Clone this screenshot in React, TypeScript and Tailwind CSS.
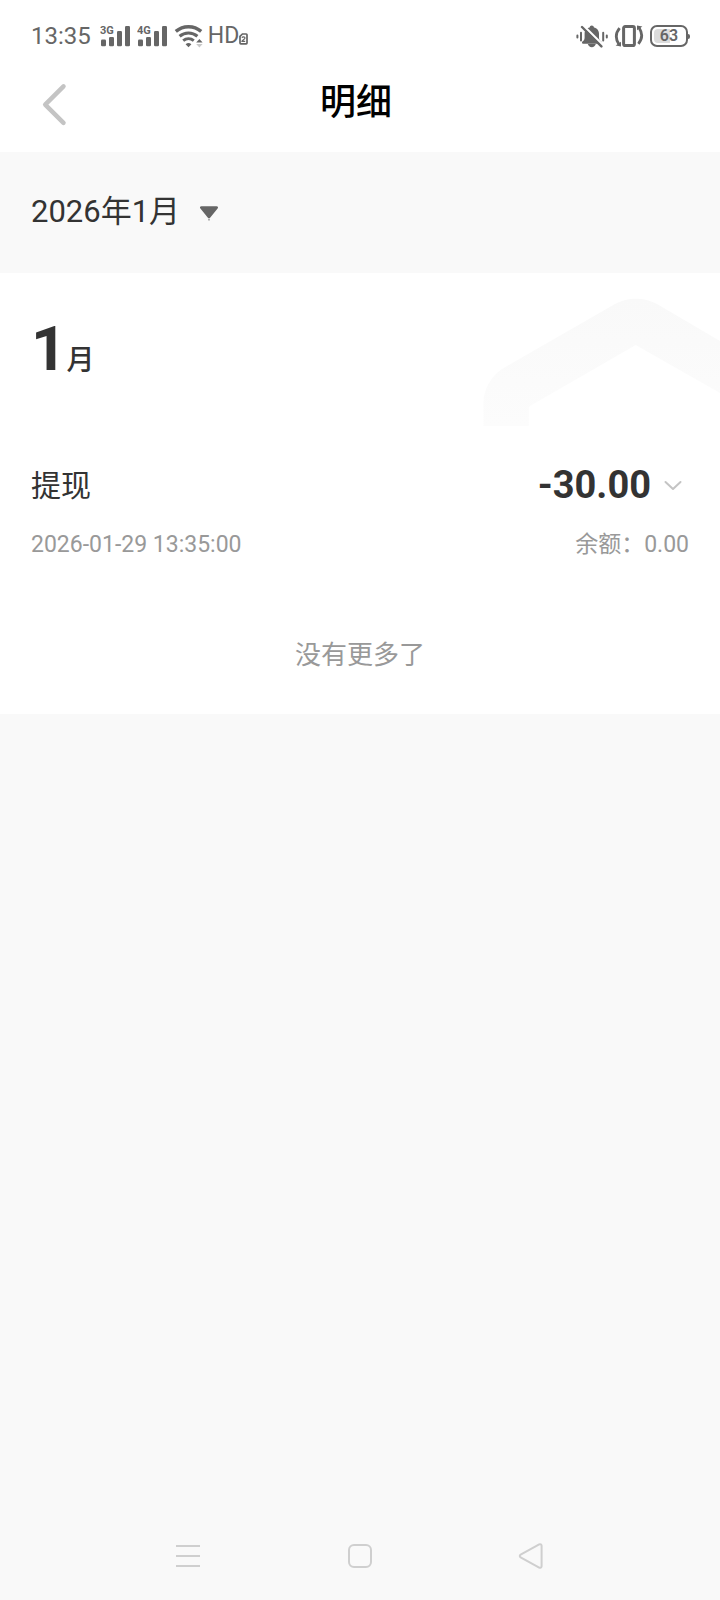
import React, { useState } from 'react';

type Transaction = {
    id: number;
    title: string;
    amount: string;
    time: string;
    balance: string;
};

const months = ['2026年1月'];

const transactions: Transaction[] = [
    { id: 1, title: '提现', amount: '-30.00', time: '2026-01-29 13:35:00', balance: '0.00' }
];

const IconSignal = ({ label }: { label: string }) => (
    <svg className="w-[30px] h-6 shrink-0" viewBox="0 0 30 24" fill="currentColor">
        <text x="0" y="9.5" fontSize="11" fontWeight="700" fontFamily="Roboto, sans-serif">{label}</text>
        <rect x="1" y="15.5" width="5" height="6.8" rx="1.2" />
        <rect x="9" y="13" width="5" height="9.3" rx="1.2" />
        <rect x="17" y="7" width="5" height="15.3" rx="1.2" />
        <rect x="25" y="2" width="5" height="20.3" rx="1.2" />
    </svg>
);

const IconWifi = () => (
    <svg className="w-[30px] h-6 shrink-0" viewBox="0 0 30 24" fill="none" stroke="currentColor">
        <path d="M1.8 7.4a19.5 19.5 0 0 1 25.4 0" strokeWidth="3.4" />
        <path d="M5.6 12.2a14 14 0 0 1 17.8 0" strokeWidth="3.2" />
        <path d="M9.2 16.6a8.6 8.6 0 0 1 10.6 0" strokeWidth="3" />
        <path d="M11.6 20.2a4.4 4.4 0 0 1 5.8 0L14.5 23.2z" fill="currentColor" stroke="none" />
        <path d="M25.4 15l3.2 3.6h-6.4z" fill="currentColor" stroke="none" />
        <path d="M25.4 23.4l3.2-3.4h-6.4z" fill="#c8c8c8" stroke="none" />
    </svg>
);

const IconSimTwo = () => (
    <svg className="w-[9px] h-3 shrink-0" viewBox="0 0 9 12" fill="none" stroke="currentColor">
        <path d="M3.4 1h3.8a.8.8 0 0 1 .8.8V10a.8.8 0 0 1-.8.8H1.8A.8.8 0 0 1 1 10V3.4z" strokeWidth="1.7" />
        <path d="M3 4.8c.4-1.3 3-1.2 3 .2C6 6.2 3.2 7.2 3 8.400h3.2" strokeWidth="1.2" />
    </svg>
);

const IconMuted = () => (
    <svg className="w-8 h-6 shrink-0" viewBox="0 0 32 24" fill="none" stroke="currentColor" strokeLinecap="round">
        <path d="M6.4 17.4c1.6-1 2.2-2 2.2-4V9.8c0-3.6 2.2-5.9 5-6.4.2-1.3 1-2 2.2-2s2 .7 2.2 2c2.800.5 5 2.800 5 6.4v3.6c0 2 .6 3 2.200 4 .8.6.4 2.4-.6 2.4H7c-1 0-1.4-1.800-.6-2.400z" fill="currentColor" stroke="none" />
        <path d="M11.8 20h8c-.6 2-2 3.2-4 3.2s-3.4-1.2-4-3.2z" fill="currentColor" stroke="none" />
        <path d="M7.6 1.8L27 21.2" stroke="#fff" strokeWidth="2.4" />
        <path d="M6 3L25.4 22.4" strokeWidth="2.4" />
        <path d="M1.4 11.6v2M5 8.8v7.6M27.2 8.8v7.6M30.8 11.6v2" strokeWidth="2" />
    </svg>
);

const IconVibrate = () => (
    <svg className="w-[30px] h-6 shrink-0" viewBox="0 0 30 24" fill="none" stroke="currentColor">
        <rect x="9.6" y="2.6" width="10.8" height="19" rx="1.6" strokeWidth="3" />
        <path d="M5.6 4.2C1.6 9 1.6 15 4.8 20" strokeWidth="2.8" />
        <path d="M24.4 19.8C28.4 15 28.4 9 25.2 4" strokeWidth="2.8" />
        <path d="M1.6 21.4l5.4-3.6v4.8zM28.4 2.6l-5.4 3.6V1.4z" fill="currentColor" stroke="none" />
    </svg>
);

const Battery = ({ level }: { level: number }) => (
    <div className="flex items-center">
        <div className="relative flex h-[22px] w-[38px] items-center justify-center rounded-[7px] border-2 border-current">
            <span className="absolute inset-y-[2px] left-[2px] w-4 rounded-l-[4px] bg-[#dcdcdc]"></span>
            <span className="relative text-base leading-4 font-semibold">{level}</span>
        </div>
        <span className="h-[5px] w-[2px] rounded-r-sm bg-current"></span>
    </div>
);

const StatusBar = () => (
    <div className="flex h-[72px] items-center justify-between pl-[31px] pr-[30px] text-[#666]">
        <div className="flex items-center gap-[7px]">
            <span className="pr-[2px] text-2xl leading-6">13:35</span>
            <IconSignal label="3G" />
            <IconSignal label="4G" />
            <div className="flex items-center gap-1">
                <IconWifi />
                <div className="flex items-end">
                    <span className="text-[23px] leading-[26px]">HD</span>
                    <div className="pb-1">
                        <IconSimTwo />
                    </div>
                </div>
            </div>
        </div>
        <div className="flex items-center gap-[6px]">
            <IconMuted />
            <IconVibrate />
            <Battery level={63} />
        </div>
    </div>
);

const Header = () => (
    <header className="grid h-20 grid-cols-[72px_1fr_80px] items-start pt-[9px]">
        <button type="button" aria-label="返回" className="flex justify-end pt-[1px] pr-1">
            <svg className="w-[26px] h-11" viewBox="0 0 26 44" fill="none" stroke="#c4c4c4" strokeWidth="4.5" strokeLinecap="round" strokeLinejoin="round">
                <path d="M21.5 4.4L3.2 22.6l18.3 18.2" />
            </svg>
        </button>
        <h1 className="text-center text-4xl leading-[44px] font-medium text-black">明细</h1>
    </header>
);

const MonthPicker = () => {
    const [month, setMonth] = useState(months[0]);

    return (
        <div className="flex items-center gap-[18px] bg-[#f9f9f9] px-[31px] pt-10 pb-10">
            <select
                aria-label="月份"
                value={month}
                onChange={(e) => setMonth(e.target.value)}
                className="appearance-none bg-transparent pb-[2px] text-[31px] leading-[39px] text-[#333]"
            >
                {months.map(m => (
                    <option key={m} value={m}>{m}</option>
                ))}
            </select>
            <svg className="w-5 h-4" viewBox="0 0 20 16" fill="#666">
                <path d="M2.4 1.2h15.2c1.4 0 1.9 1.2 1 2.2L10.9 13c-.5.6-1.3.6-1.8 0L1.4 3.4c-.9-1-.4-2.2 1-2.2z" />
                <rect x="9.5" y="14" width="1" height="1.5" />
            </svg>
        </div>
    );
};

const Watermark = () => (
    <svg className="absolute top-[25px] right-0 w-[237px] h-32" viewBox="1 0 237 128">
        <defs>
            <linearGradient id="roof" x1="0" y1="0" x2="0" y2="1">
                <stop offset="0" stopColor="#f9f9f9" />
                <stop offset="1" stopColor="#fcfcfc" />
            </linearGradient>
        </defs>
        <path d="M1.500 128v-23C1.500 90 10 76 25 68L133 6c13-7 29-7 42 0l63 37v52L153.7 47 48 108q-1.200 1-1.200 3v17z" fill="url(#roof)" />
    </svg>
);

const TransactionItem = ({ item }: { item: Transaction }) => (
    <li className="flex flex-col gap-6">
        <div className="flex items-center justify-between">
            <span className="pt-[2px] text-3xl leading-[38px] text-[#333]">{item.title}</span>
            <div className="flex items-center gap-3 pr-[6px]">
                <span className="text-[38px] leading-10 font-bold text-[#333]">{item.amount}</span>
                <button type="button" aria-label="展开" className="pt-[2px]">
                    <svg className="w-5 h-3" viewBox="0 0 20 12" fill="none" stroke="#c4c4c4" strokeWidth="2" strokeLinecap="round" strokeLinejoin="round">
                        <path d="M2.5 2l7.5 7 7.5-7" />
                    </svg>
                </button>
            </div>
        </div>
        <div className="flex items-center justify-between text-[23px] leading-8 text-[#999]">
            <time>{item.time}</time>
            <span>余额：{item.balance}</span>
        </div>
    </li>
);

const NavBar = () => (
    <nav className="mt-auto flex h-[88px] items-center justify-around px-[102px]">
        <button type="button" aria-label="最近任务">
            <svg className="w-7 h-7" viewBox="0 0 28 28" fill="none" stroke="#cfcfcf" strokeWidth="2">
                <path d="M2 4h24M2 14h24M2 24h24" />
            </svg>
        </button>
        <button type="button" aria-label="主屏幕">
            <svg className="w-7 h-7" viewBox="0 0 28 28" fill="none" stroke="#cfcfcf" strokeWidth="2">
                <rect x="3" y="3" width="22" height="22" rx="5" />
            </svg>
        </button>
        <button type="button" aria-label="后退">
            <svg className="w-7 h-7" viewBox="0 0 28 28" fill="none" stroke="#cfcfcf" strokeWidth="2">
                <path d="M21.2 2.4L2.6 12.6c-1.1.6-1.1 2.2 0 2.8L21.2 25.6c1.1.6 2.4-.2 2.4-1.4V3.8c0-1.2-1.3-2-2.4-1.4z" />
            </svg>
        </button>
    </nav>
);

const App = () => (
    <div className="flex min-h-screen flex-col bg-[#f9f9f9] font-[Roboto,'Noto_Sans_CJK_SC',sans-serif]">
        <div className="bg-white">
            <StatusBar />
            <Header />
        </div>
        <MonthPicker />
        <main className="relative bg-white px-[31px] pt-10 pb-[43px]">
            <Watermark />
            <h2 className="relative mb-20 text-[#333]">
                <span className="text-[62px] leading-[72px] font-bold">1</span>
                <span className="text-[28px] font-medium">月</span>
            </h2>
            <ul>
                {transactions.map(item => (
                    <TransactionItem key={item.id} item={item} />
                ))}
            </ul>
            <p className="mt-[78px] text-center text-[26px] leading-8 text-[#999]">没有更多了</p>
        </main>
        <NavBar />
    </div>
);

export default App;
